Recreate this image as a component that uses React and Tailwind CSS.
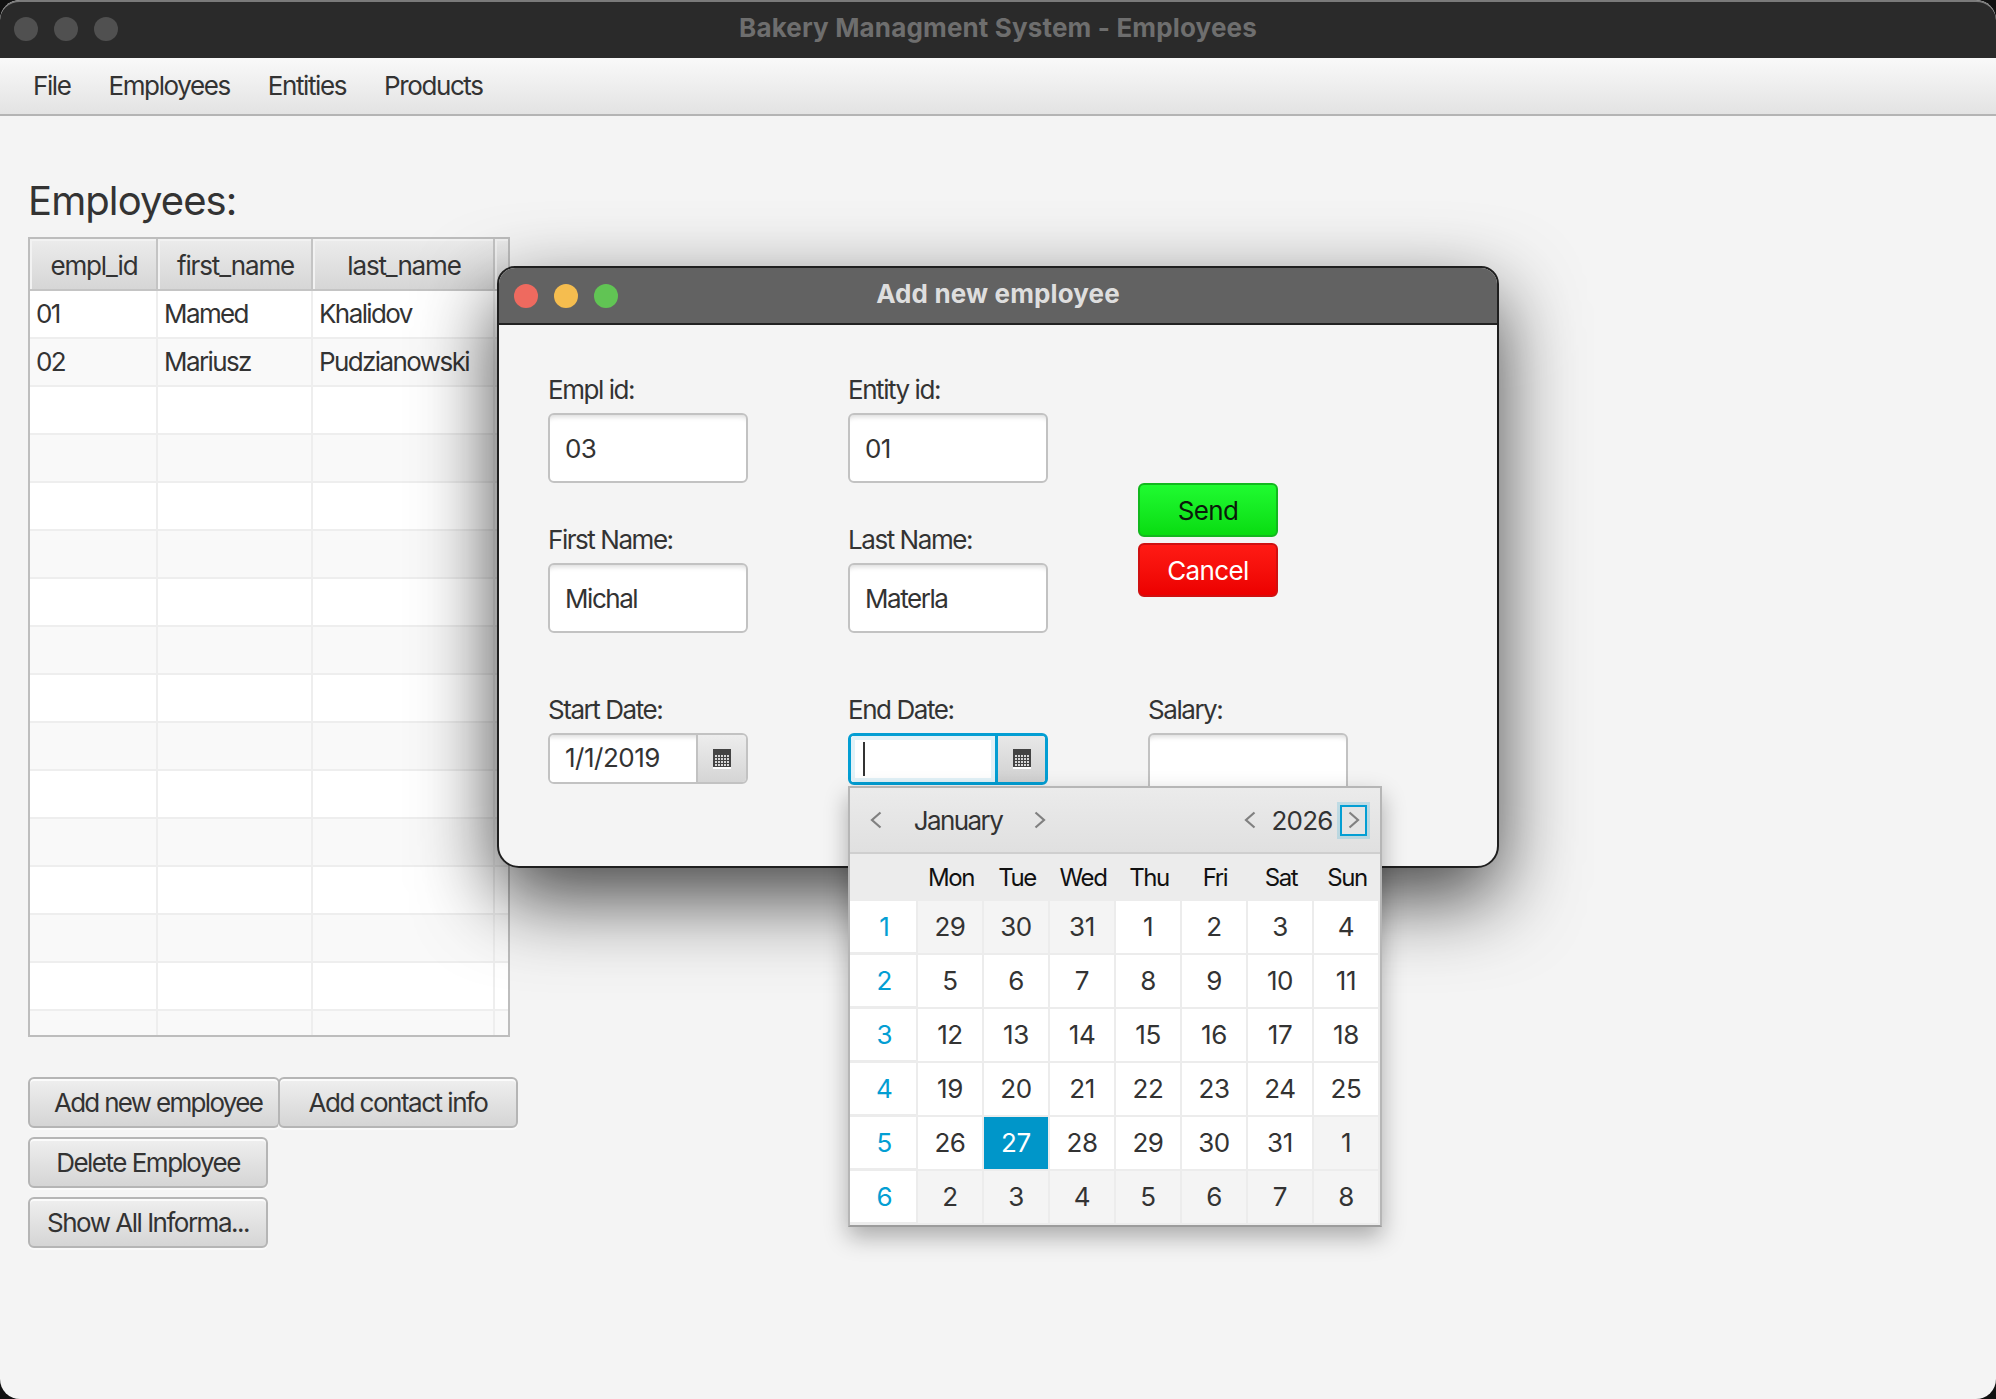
// Bakery employees window with the "add new employee" dialog and date picker open.

const ROWS = [
  ['01', 'Mamed', 'Khalidov'],
  ['02', 'Mariusz', 'Pudzianowski'],
  ...Array.from({ length: 14 }, () => ['', '', '']),
];

const WEEKS = [
  [1, [[29, 1], [30, 1], [31, 1], [1], [2], [3], [4]]],
  [2, [[5], [6], [7], [8], [9], [10], [11]]],
  [3, [[12], [13], [14], [15], [16], [17], [18]]],
  [4, [[19], [20], [21], [22], [23], [24], [25]]],
  [5, [[26], [27, 2], [28], [29], [30], [31], [1, 1]]],
  [6, [[2, 1], [3, 1], [4, 1], [5, 1], [6, 1], [7, 1], [8, 1]]],
];

function Lights({ colors, className = '' }) {
  return (
    <div className={`absolute flex h-full items-center gap-[16px] ${className}`}>
      {colors.map((c, i) => (
        <span key={i} className={`h-[24px] w-[24px] rounded-full ${c}`} />
      ))}
    </div>
  );
}

function GrayButton({ className = '', children }) {
  return (
    <div className={`flex h-[51px] items-center justify-center rounded-[6px] border-2 border-[#b5b5b5] bg-gradient-to-b from-[#efefef] to-[#d5d5d5] text-[26px] text-[#333] shadow-[0_2px_0_#fafafa,inset_0_2px_0_#fbfbfb] ${className}`}>
      {children}
    </div>
  );
}

function TextField({ value, className = '' }) {
  return (
    <div className={`flex h-[70px] w-[200px] items-center rounded-[6px] border-2 border-[#c2c2c2] bg-white pl-[15px] text-[26px] text-[#333] shadow-[inset_0_7px_5px_-5px_rgba(0,0,0,0.14)] ${className}`}>
      {value}
    </div>
  );
}

function Label({ children }) {
  return <div className="flex h-[30px] items-center pb-[2px] text-[26px] tracking-[-1.45px] text-[#333]">{children}</div>;
}

function CalendarIcon() {
  return (
    <svg width="18" height="20" viewBox="0 0 18 20">
      <rect x="0" y="0" width="18" height="18" fill="#444" />
      <rect x="0" y="18" width="18" height="2" fill="#fff" />
      {[6, 9, 12, 15].map((y) =>
        [2, 5, 8, 11, 14].map((x) => <rect key={`${x}-${y}`} x={x} y={y} width="2" height="2" fill="#d8d8d8" />),
      )}
    </svg>
  );
}

function Arrow({ dir }) {
  const points = dir === 'left' ? '10.5,1.5 2,9 10.5,16.5' : '1.5,1.5 10,9 1.5,16.5';
  return (
    <svg width="12" height="18" viewBox="0 0 12 18" fill="none">
      <polyline points={points} stroke="#808080" strokeWidth="2.2" />
    </svg>
  );
}

function DatePopup() {
  return (
    <div className="absolute left-[349px] top-[518px] z-10 w-[534px] border-2 border-[#b6b6b6] border-b-[#9c9c9c] bg-[#ececec] shadow-[0_10px_22px_rgba(0,0,0,0.3)]">
      <div className="flex h-[66px] items-center justify-between border-b-2 border-[#cfcfcf] bg-gradient-to-b from-[#ebebeb] to-[#e0e0e0] text-[26px] text-[#333]">
        <div className="flex items-center pl-[12px]">
          <div className="flex w-[28px] justify-center"><Arrow dir="left" /></div>
          <div className="w-[136px] text-center tracking-[-1.6px]">January</div>
          <div className="flex w-[28px] justify-center"><Arrow dir="right" /></div>
        </div>
        <div className="flex items-center pr-[13px]">
          <div className="flex w-[28px] justify-center"><Arrow dir="left" /></div>
          <div className="w-[76px] text-center tracking-[-0.8px]">2026</div>
          <div className="flex h-[31px] w-[27px] items-center justify-center border-2 border-[#039ed3] bg-[#e4e4e4] shadow-[0_0_0_3px_rgba(3,158,211,0.18)]">
            <Arrow dir="right" />
          </div>
        </div>
      </div>
      <div className="grid h-[47px] grid-cols-[68px_repeat(7,66px)] items-center text-center text-[24px] tracking-[-1.4px] text-[#111]">
        <span />
        {['Mon', 'Tue', 'Wed', 'Thu', 'Fri', 'Sat', 'Sun'].map((d) => (
          <span key={d}>{d}</span>
        ))}
      </div>
      {WEEKS.map(([num, days]) => (
        <div key={num} className="grid h-[54px] grid-cols-[68px_repeat(7,66px)]">
          <div className="flex h-[51px] w-[66px] items-center justify-center bg-white pl-[3px] text-[26px] text-[#039ed3]">{num}</div>
          {days.map(([d, kind], i) => (
            <div
              key={i}
              className={`flex h-[52px] w-[64px] items-center justify-center pb-[2px] text-[26px] tracking-[-0.4px] ${
                kind === 2 ? 'bg-[#0096c9] text-white' : kind === 1 ? 'bg-[#f4f4f4] text-[#333]' : 'bg-white text-[#333]'
              }`}
            >
              {d}
            </div>
          ))}
        </div>
      ))}
    </div>
  );
}

function Dialog() {
  return (
    <div className="absolute left-[497px] top-[266px] flex h-[602px] w-[1002px] flex-col rounded-t-[18px] rounded-b-[22px] border-2 border-[#1f1f1f] bg-[#f4f4f4] shadow-[0_30px_80px_rgba(0,0,0,0.72)]">
      <div className="relative flex h-[57px] shrink-0 items-center justify-center rounded-t-[16px] border-b-2 border-[#222] bg-[#626262] pb-[4px] text-[26px] font-bold tracking-[0.13px] text-[#dedede]">
        <Lights className="left-[15px] top-0" colors={['bg-[#ee6a5f]', 'bg-[#f5bd4f]', 'bg-[#61c454]']} />
        Add new employee
      </div>
      <div className="pl-[49px] pt-[50px]">
        <div className="grid grid-cols-[300px_290px_auto]">
          <div>
            <Label>Empl id:</Label>
            <TextField value="03" className="mt-[8px] tracking-[-0.6px]" />
          </div>
          <div>
            <Label>Entity id:</Label>
            <TextField value="01" className="mt-[8px] tracking-[-0.6px]" />
          </div>
          <div className="row-span-2 pt-[108px]">
            <div className="flex h-[54px] w-[140px] items-center justify-center rounded-[6px] border-2 border-[#12b81e] bg-gradient-to-b from-[#1ffb30] to-[#08dc10] text-[26px] tracking-[-0.6px] text-[#0a1a0a]">Send</div>
            <div className="mt-[6px] flex h-[54px] w-[140px] items-center justify-center rounded-[6px] border-2 border-[#d01010] bg-gradient-to-b from-[#ff1a14] to-[#ec0000] text-[26px] tracking-[-0.6px] text-white">Cancel</div>
          </div>
          <div className="mt-[42px]">
            <Label>First Name:</Label>
            <TextField value="Michal" className="mt-[8px] tracking-[-1.45px]" />
          </div>
          <div className="mt-[42px]">
            <Label>Last Name:</Label>
            <TextField value="Materla" className="mt-[8px] tracking-[-1.45px]" />
          </div>
        </div>
        <div className="mt-[62px] flex">
          <div className="w-[300px]">
            <Label>Start Date:</Label>
            <div className="mt-[8px] flex h-[51px] w-[200px] overflow-hidden rounded-[6px] border-2 border-[#c2c2c2]">
              <div className="flex flex-1 items-center bg-white pb-[2px] pl-[15px] text-[26px] tracking-[-0.5px] text-[#333] shadow-[inset_0_7px_5px_-5px_rgba(0,0,0,0.14)]">1/1/2019</div>
              <div className="flex w-[50px] items-center justify-center border-l-2 border-[#c2c2c2] bg-gradient-to-b from-[#ededed] to-[#d5d5d5]"><CalendarIcon /></div>
            </div>
          </div>
          <div className="w-[300px]">
            <Label>End Date:</Label>
            <div className="mt-[8px] flex h-[52px] w-[200px] overflow-hidden rounded-[6px] border-[3px] border-[#039ed3]">
              <div className="flex flex-1 items-center border-[4px] border-[#e2f2f8] bg-white pl-[8px]">
                <span className="h-[34px] w-[2px] bg-[#333]" />
              </div>
              <div className="flex w-[50px] items-center justify-center border-l-[3px] border-[#039ed3] bg-gradient-to-b from-[#e8e8e8] to-[#d0d0d0]"><CalendarIcon /></div>
            </div>
          </div>
          <div>
            <Label>Salary:</Label>
            <TextField value="" className="mt-[8px]" />
          </div>
        </div>
      </div>
      <DatePopup />
    </div>
  );
}

export default function App() {
  return (
    <div className="relative h-[1399px] w-[1996px] overflow-hidden bg-[#111] [font-family:Inter,'Noto_Sans',sans-serif]">
      <div className="flex h-full flex-col rounded-[20px] bg-[#f4f4f4]">
        <div className="relative flex h-[58px] shrink-0 items-center justify-center rounded-t-[20px] border-t-2 border-[#7a7a7a] bg-[#2a2a2a] pb-[6px] text-[26px] font-bold tracking-[0.15px] text-[#6e6e6e]">
          <Lights className="left-[14px] -top-[1px]" colors={['bg-[#505050]', 'bg-[#505050]', 'bg-[#505050]']} />
          Bakery Managment System - Employees
        </div>
        <div className="flex h-[58px] shrink-0 items-center gap-[38px] border-b-2 border-[#b4b4b4] bg-gradient-to-b from-[#f9f9f9] to-[#e3e3e3] pb-[2px] pl-[33px] text-[26px] tracking-[-1.4px] text-[#333]">
          <span>File</span>
          <span>Employees</span>
          <span>Entities</span>
          <span>Products</span>
        </div>
        <div className="pl-[28px] pt-[56px]">
          <h1 className="flex h-[65px] items-center pb-[8px] text-[40px] tracking-[-0.9px] text-[#333]">Employees:</h1>
          <div className="h-[800px] w-[482px] overflow-hidden border-2 border-[#bdbdbd] bg-white">
            <div className="grid h-[52px] grid-cols-[128px_155px_182px_13px] border-b-2 border-[#c4c4c4] text-center text-[26px] tracking-[-1.15px] text-[#333]">
              {['empl_id', 'first_name', 'last_name', ''].map((h, i) => (
                <div key={i} className="flex items-center justify-center border-r-2 border-[#c4c4c4] bg-gradient-to-b from-[#ececec] to-[#d6d6d6] pl-[2px] pt-[2px] shadow-[inset_2px_2px_0_#f2f2f2] last:border-r-0">{h}</div>
              ))}
            </div>
            {ROWS.map((row, i) => (
              <div key={i} className={`grid h-[48px] grid-cols-[128px_155px_182px_13px] border-b-2 border-[#eeeeee] text-[26px] tracking-[-1.6px] text-[#333] ${i % 2 ? 'bg-[#f9f9f9]' : 'bg-white'}`}>
                {[...row, ''].map((c, j) => (
                  <div key={j} className="flex items-center border-r-2 border-[#eeeeee] pb-[2px] pl-[6px] last:border-r-0">{c}</div>
                ))}
              </div>
            ))}
          </div>
          <div className="mt-[40px] flex">
            <GrayButton className="w-[252px] pl-[8px] tracking-[-1.7px]">Add new employee</GrayButton>
            <GrayButton className="-ml-[2px] w-[240px] tracking-[-1.5px]">Add contact info</GrayButton>
          </div>
          <GrayButton className="mt-[9px] w-[240px] tracking-[-1.5px]">Delete Employee</GrayButton>
          <GrayButton className="mt-[9px] w-[240px] tracking-[-1.5px]">Show All Informa...</GrayButton>
        </div>
      </div>
      <Dialog />
    </div>
  );
}
